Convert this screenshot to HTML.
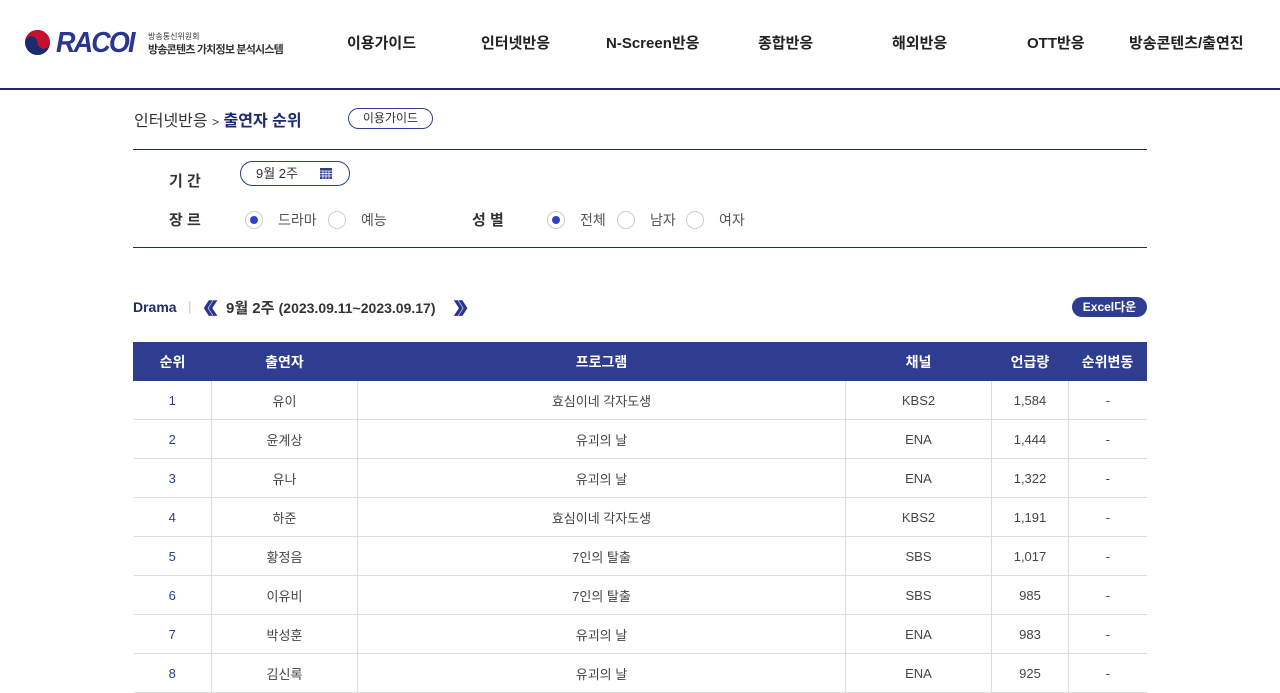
<!DOCTYPE html>
<html><head><meta charset="utf-8"><style>
*{margin:0;padding:0;box-sizing:border-box}
body{width:1280px;height:690px;overflow:hidden;background:#fff;font-family:"Liberation Sans","Noto Sans CJK KR",sans-serif;color:#333;position:relative}
.a{position:absolute;white-space:nowrap}
.nav{font-size:15px;font-weight:bold;color:#222;top:32px}
.radio{position:absolute;width:18px;height:18px;border:1px solid #ccc;border-radius:50%;background:#fff}
.radio.on::after{content:"";position:absolute;left:4px;top:4px;width:8px;height:8px;border-radius:50%;background:#2f3fc8}
table{position:absolute;left:133px;top:342px;width:1014px;border-collapse:collapse;font-size:13px}
th{background:#2e3d8f;color:#fff;height:38px;font-weight:bold;font-size:14px;border:1px solid #2e3d8f}
td{height:39px;text-align:center;border-bottom:1px solid #ddd;border-left:1px solid #ddd;color:#444}
td:first-child{border-left:none;color:#2e3d8f}
</style></head><body>
<svg class="a" style="left:24px;top:29px" width="27" height="27" viewBox="0 0 28 28"><circle cx="14" cy="14" r="13" fill="#1c2a6e"/><path d="M1 14a13 13 0 0 1 26 0a6.5 6.5 0 0 1-13 0a6.5 6.5 0 0 0-13 0z" fill="#c8102e"/></svg>
<div class="a" style="left:56px;top:27px;font-size:29px;font-weight:bold;font-style:italic;color:#2a3590;letter-spacing:-2px;transform:scaleX(0.93);transform-origin:left">RACOI</div>
<div class="a" style="left:148px;top:31px;font-size:8px;color:#333">방송통신위원회</div>
<div class="a" style="left:148px;top:41px;font-size:11px;font-weight:bold;color:#333;letter-spacing:-0.8px">방송콘텐츠 가치정보 분석시스템</div>
<div class="a nav" style="left:347px">이용가이드</div>
<div class="a nav" style="left:481px">인터넷반응</div>
<div class="a nav" style="left:606px">N-Screen반응</div>
<div class="a nav" style="left:758px">종합반응</div>
<div class="a nav" style="left:892px">해외반응</div>
<div class="a nav" style="left:1027px">OTT반응</div>
<div class="a nav" style="left:1129px">방송콘텐츠/출연진</div>
<div class="a" style="left:0;top:88px;width:1280px;height:2px;background:#1c2a6e"></div>
<div class="a" style="left:134px;top:107px;font-size:16px;color:#333">인터넷반응 <span style="font-size:12px">&gt;</span> <span style="color:#1c2a6e;font-weight:bold">출연자 순위</span></div>
<div class="a" style="left:348px;top:108px;width:85px;height:21px;border:1px solid #2e3d8f;border-radius:11px;font-size:12px;text-align:center;line-height:19px;color:#333">이용가이드</div>
<div class="a" style="left:133px;top:149px;width:1014px;height:1px;background:#1c2a6e"></div>
<div class="a" style="left:169px;top:170px;font-size:15px;font-weight:bold;color:#333">기 간</div>
<div class="a" style="left:240px;top:161px;width:110px;height:25px;border:1px solid #2e3d8f;border-radius:13px;font-size:13px;line-height:23px;padding-left:15px;color:#333">9월 2주 <svg style="position:absolute;left:79px;top:6px" width="12" height="11" viewBox="0 0 12 11"><rect width="12" height="11" fill="#2e3d8f"/><path d="M0 3h12M0 5.5h12M0 8h12M3 3v8M6 3v8M9 3v8" stroke="#fff" stroke-width=".8"/></svg></div>
<div class="a" style="left:169px;top:209px;font-size:15px;font-weight:bold;color:#333">장 르</div>
<div class="radio on" style="left:245px;top:211px"></div><div class="a" style="left:278px;top:210px;font-size:14px;color:#555">드라마</div>
<div class="radio" style="left:328px;top:211px"></div><div class="a" style="left:361px;top:210px;font-size:14px;color:#555">예능</div>
<div class="a" style="left:472px;top:209px;font-size:15px;font-weight:bold;color:#333">성 별</div>
<div class="radio on" style="left:547px;top:211px"></div><div class="a" style="left:580px;top:210px;font-size:14px;color:#555">전체</div>
<div class="radio" style="left:617px;top:211px"></div><div class="a" style="left:650px;top:210px;font-size:14px;color:#555">남자</div>
<div class="radio" style="left:686px;top:211px"></div><div class="a" style="left:719px;top:210px;font-size:14px;color:#555">여자</div>
<div class="a" style="left:133px;top:247px;width:1014px;height:1px;background:#1c2a6e"></div>
<div class="a" style="left:133px;top:299px;font-size:14px;font-weight:bold;color:#1c2a6e">Drama</div>
<div class="a" style="left:188px;top:298px;font-size:14px;color:#ccc">|</div>
<div class="a" style="left:202px;top:298px;font-size:15px;font-weight:bold;color:#2a3590;letter-spacing:-8px">❮❮</div>
<div class="a" style="left:226px;top:297px;font-size:15px;font-weight:bold;color:#333">9월 2주 <span style="font-size:14px">(2023.09.11~2023.09.17)</span></div>
<div class="a" style="left:452px;top:298px;font-size:15px;font-weight:bold;color:#2a3590;letter-spacing:-8px">❯❯</div>
<div class="a" style="left:1072px;top:297px;width:75px;height:20px;background:#2e3d8f;border-radius:10px;color:#fff;font-size:12px;font-weight:bold;text-align:center;line-height:20px">Excel다운</div>
<table>
<tr><th style="width:78px">순위</th><th style="width:146px">출연자</th><th style="width:488px">프로그램</th><th style="width:146px">채널</th><th style="width:77px">언급량</th><th>순위변동</th></tr>
<tr><td>1</td><td>유이</td><td>효심이네 각자도생</td><td>KBS2</td><td>1,584</td><td>-</td></tr>
<tr><td>2</td><td>윤계상</td><td>유괴의 날</td><td>ENA</td><td>1,444</td><td>-</td></tr>
<tr><td>3</td><td>유나</td><td>유괴의 날</td><td>ENA</td><td>1,322</td><td>-</td></tr>
<tr><td>4</td><td>하준</td><td>효심이네 각자도생</td><td>KBS2</td><td>1,191</td><td>-</td></tr>
<tr><td>5</td><td>황정음</td><td>7인의 탈출</td><td>SBS</td><td>1,017</td><td>-</td></tr>
<tr><td>6</td><td>이유비</td><td>7인의 탈출</td><td>SBS</td><td>985</td><td>-</td></tr>
<tr><td>7</td><td>박성훈</td><td>유괴의 날</td><td>ENA</td><td>983</td><td>-</td></tr>
<tr><td>8</td><td>김신록</td><td>유괴의 날</td><td>ENA</td><td>925</td><td>-</td></tr>
</table>
</body></html>
